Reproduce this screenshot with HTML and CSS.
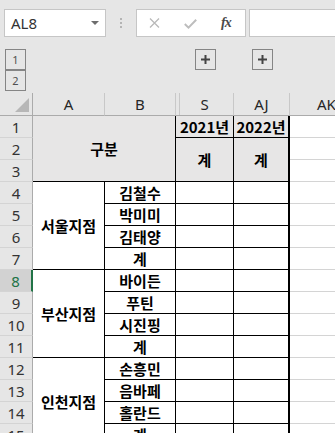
FILE: index.html
```html
<!DOCTYPE html>
<html lang="ko">
<head>
<meta charset="utf-8">
<link rel="stylesheet" href="styles.css">
</head>
<body>
<div class="fbar">
  <div class="namebox">
    <span>AL8</span>
    <svg class="arrow" width="8" height="4" viewBox="0 0 8 4"><polygon points="0,0 8,0 4,4" fill="#6d6d6d"/></svg>
  </div>
  <div class="sep">
    <svg width="2" height="10" viewBox="0 0 2 10"><rect x="0" y="0" width="2" height="2" fill="#b4b4b4"/><rect x="0" y="4" width="2" height="2" fill="#b4b4b4"/><rect x="0" y="8" width="2" height="2" fill="#b4b4b4"/></svg>
  </div>
  <div class="fbtns">
    <svg class="ic-x" width="11" height="10" viewBox="0 0 11 10"><path d="M1 0.5 L10 9.5 M10 0.5 L1 9.5" stroke="#b9b9b9" stroke-width="1.3" fill="none"/></svg>
    <svg class="ic-ok" width="13" height="10" viewBox="0 0 13 10"><path d="M0.8 5 L4.5 8.6 L12.2 0.8" stroke="#bdbdbd" stroke-width="2" fill="none"/></svg>
    <span class="fx">fx</span>
  </div>
  <div class="finput"></div>
</div>

<div class="outline">
  <div class="levels">
    <div class="lvl">1</div>
    <div class="lvl">2</div>
  </div>
  <div class="plus plus-s"><svg width="9" height="9" viewBox="0 0 9 9"><path d="M0 4.5 H9 M4.5 0 V9" stroke="#444" stroke-width="2"/></svg></div>
  <div class="plus plus-aj"><svg width="9" height="9" viewBox="0 0 9 9"><path d="M0 4.5 H9 M4.5 0 V9" stroke="#444" stroke-width="2"/></svg></div>
</div>

<div class="sheet">
  <div class="corner"><svg width="14" height="14" viewBox="0 0 14 14"><polygon points="14,0 14,14 0,14" fill="#b7b7b7"/></svg></div>
  <div class="ch">A</div>
  <div class="ch">B</div>
  <div class="ch ch-s">S</div>
  <div class="ch">AJ</div>
  <div class="ch ch-ak">AK</div>

  <div class="rh">1</div><div class="c g gubun">구분</div><div class="c g">2021년</div><div class="c g aj">2022년</div><div class="ak"></div>
  <div class="rh">2</div><div class="c g r2">계</div><div class="c g aj r2">계</div><div class="ak"></div>
  <div class="rh">3</div><div class="ak"></div>

  <div class="rh">4</div><div class="c r4">서울지점</div><div class="c">김철수</div><div class="c"></div><div class="c aj"></div><div class="ak"></div>
  <div class="rh">5</div><div class="c">박미미</div><div class="c"></div><div class="c aj"></div><div class="ak"></div>
  <div class="rh">6</div><div class="c">김태양</div><div class="c"></div><div class="c aj"></div><div class="ak"></div>
  <div class="rh">7</div><div class="c">계</div><div class="c"></div><div class="c aj"></div><div class="ak"></div>

  <div class="rh sel">8</div><div class="c r4">부산지점</div><div class="c">바이든</div><div class="c"></div><div class="c aj"></div><div class="ak"></div>
  <div class="rh">9</div><div class="c">푸틴</div><div class="c"></div><div class="c aj"></div><div class="ak"></div>
  <div class="rh">10</div><div class="c">시진핑</div><div class="c"></div><div class="c aj"></div><div class="ak"></div>
  <div class="rh">11</div><div class="c">계</div><div class="c"></div><div class="c aj"></div><div class="ak"></div>

  <div class="rh">12</div><div class="c r4">인천지점</div><div class="c">손흥민</div><div class="c"></div><div class="c aj"></div><div class="ak"></div>
  <div class="rh">13</div><div class="c">음바페</div><div class="c"></div><div class="c aj"></div><div class="ak"></div>
  <div class="rh">14</div><div class="c">홀란드</div><div class="c"></div><div class="c aj"></div><div class="ak"></div>
  <div class="rh">15</div><div class="c">계</div><div class="c"></div><div class="c aj"></div><div class="ak"></div>
</div>
</body>
</html>
```

FILE: styles.css
```css
html, body {
  margin: 0;
  padding: 0;
}
body {
  background: #e6e6e6;
  width: 335px;
  height: 433px;
  overflow: hidden;
  font-family: "Noto Sans", "Open Sans", sans-serif;
}

/* formula bar */
.fbar {
  display: flex;
  height: 28px;
  margin-top: 9px;
}
.namebox {
  box-sizing: border-box;
  margin-left: 4px;
  width: 102px;
  height: 28px;
  flex: none;
  background: #fff;
  border: 1px solid #c6c6c6;
  display: flex;
  align-items: center;
  justify-content: space-between;
  padding: 0 6px 0 6px;
  font-size: 15px;
  color: #333;
}
.sep {
  width: 30px;
  flex: none;
  display: flex;
  align-items: center;
  justify-content: center;
}
.fbtns {
  box-sizing: border-box;
  width: 110px;
  height: 28px;
  flex: none;
  background: #fff;
  border: 1px solid #c6c6c6;
  display: flex;
  align-items: center;
}
.ic-x { margin-left: 12px; }
.ic-ok { margin-left: 24px; margin-top: 1px; }
.fx {
  margin-left: 24px;
  font-family: "Liberation Serif", "DejaVu Serif", serif;
  font-style: italic;
  font-weight: bold;
  font-size: 14px;
  color: #4a4a4a;
  letter-spacing: -1px;
}
.finput {
  flex: 1;
  margin-left: 3px;
  background: #fff;
  border: 1px solid #c6c6c6;
  border-right: none;
}

/* outline area */
.outline {
  display: grid;
  grid-template-columns: 33px 72px 71px 58px 56px 1fr;
  height: 44px;
  margin-top: 12px;
}
.levels {
  grid-column: 1;
  margin-left: 5px;
  display: flex;
  flex-direction: column;
}
.lvl {
  box-sizing: border-box;
  width: 21px;
  height: 21px;
  border: 1px solid #858585;
  display: flex;
  align-items: center;
  justify-content: center;
  font-size: 11px;
  color: #505050;
}
.plus {
  box-sizing: border-box;
  width: 21px;
  height: 21px;
  border: 1px solid #858585;
  display: flex;
  align-items: center;
  justify-content: center;
  justify-self: center;
}
.plus-s { grid-column: 4; }
.plus-aj { grid-column: 5; }

/* sheet */
.sheet {
  display: grid;
  grid-template-columns: 33px 72px 71px 58px 56px 1fr;
  grid-template-rows: 23px;
  grid-auto-rows: 22px;
}
.sheet > div {
  box-sizing: border-box;
  display: flex;
  align-items: center;
  justify-content: center;
}
.corner {
  border-right: 1px solid #ababab;
  border-bottom: 1px solid #ababab;
  justify-content: flex-end !important;
  align-items: flex-end !important;
  padding: 0 3px 3px 0;
}
.ch {
  border-right: 1px solid #c8c8c8;
  border-bottom: 1px solid #ababab;
  font-size: 15px;
  color: #262626;
}
.ch-s {
  box-shadow: inset 3px 0 0 #e6e6e6, inset 4px 0 0 #c8c8c8;
}
.sheet > .ch-ak {
  border-right: none;
  justify-content: flex-start;
  padding-left: 27px;
  overflow: hidden;
  white-space: nowrap;
}
.rh {
  border-right: 1px solid #ababab;
  border-bottom: 1px solid #d4d4d4;
  font-size: 15px;
  color: #333;
}
.rh.sel {
  background: #d2d2d2;
  color: #217346;
  border-right: 2px solid #217346;
}
.c {
  background: #fff;
  border-right: 1px solid #000;
  border-bottom: 1px solid #000;
  font-family: "Noto Sans CJK KR", "Noto Sans", sans-serif;
  font-weight: bold;
  font-size: 15px;
  color: #000;
}
.g { background: #e7e6e6; }
.aj { border-right: 2px solid #000; }
.ak {
  background: #fff;
  border-bottom: 1px solid #d4d4d4;
}
.gubun {
  grid-row: span 3;
  grid-column: span 2;
}
.r2 { grid-row: span 2; }
.r4 { grid-row: span 4; }
```
